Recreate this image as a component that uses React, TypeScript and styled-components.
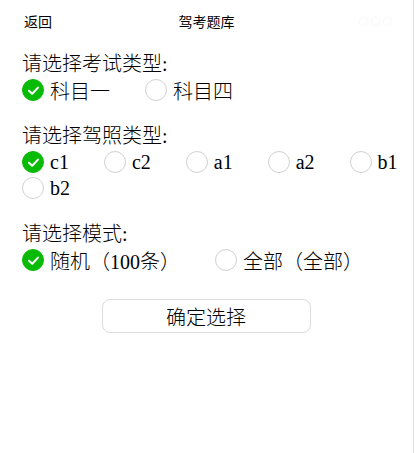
import React, { useState } from "react";
import styled, { createGlobalStyle } from "styled-components";

const Global = createGlobalStyle`
  html, body { margin: 0; padding: 0; background: #fff; }
  body { font-family: "Liberation Serif", "Noto Sans CJK SC", serif; color: #000; }
`;

const Page = styled.div`
  width: 414px;
  height: 453px;
  box-sizing: border-box;
  border-right: 1px solid #dcdcdc;
  background: #fff;
  overflow: hidden;
`;

const NavBar = styled.div`
  height: 42px;
  display: grid;
  grid-template-columns: 1fr auto 1fr;
  align-items: center;
  padding: 0 24px;
  font-family: "Noto Sans CJK SC", "Noto Sans", sans-serif;
  font-size: 14px;
  color: #000;
`;

const Back = styled.span`
  justify-self: start;
`;

const NavTitle = styled.span``;

const Dots = styled.div`
  justify-self: end;
  display: flex;
  gap: 5px;
  margin-right: -2px;
`;

const Dot = styled.span`
  width: 7px;
  height: 7px;
  border-radius: 50%;
  background: #fff;
  box-shadow: 0 0 3px rgba(0, 0, 0, 0.08);
`;

const Content = styled.div`
  padding: 9px 4px 0 22px;
`;

const Section = styled.div`
  & + & {
    margin-top: 20px;
  }
`;

const Title = styled.div`
  font-size: 20px;
  line-height: 26px;
  font-weight: 300;
`;

const Options = styled.div`
  display: flex;
  flex-wrap: wrap;
  column-gap: 35px;
`;

const Option = styled.label`
  display: flex;
  align-items: center;
  height: 26px;
  font-size: 20px;
  font-weight: 300;
  cursor: pointer;
`;

const Circle = styled.span<{ $on: boolean }>`
  width: 22px;
  height: 22px;
  box-sizing: border-box;
  border-radius: 50%;
  margin-right: 6px;
  display: flex;
  align-items: center;
  justify-content: center;
  background: ${(p) => (p.$on ? "#09bb07" : "#fff")};
  border: 1px solid ${(p) => (p.$on ? "#09bb07" : "#d1d1d1")};
`;

const ButtonRow = styled.div`
  display: flex;
  justify-content: center;
  margin-top: 26px;
  padding-right: 1px;
`;

const Button = styled.button`
  width: 209px;
  height: 34px;
  box-sizing: border-box;
  border: 1px solid #dcdcdc;
  border-radius: 8px;
  background: #fff;
  font-family: "Liberation Serif", "Noto Sans CJK SC", serif;
  font-size: 20px;
  font-weight: 300;
  color: #000;
  padding: 0;
`;

const Check = () => (
  <svg width="13" height="13" viewBox="0 0 13 13">
    <path d="M2 6.8 L5.2 9.8 L11 3.6" fill="none" stroke="#fff" strokeWidth="2" strokeLinecap="round" strokeLinejoin="round" />
  </svg>
);

type GroupProps = { title: string; items: string[]; value: number; onChange: (i: number) => void };

const Group = ({ title, items, value, onChange }: GroupProps) => (
  <Section>
    <Title>{title}</Title>
    <Options>
      {items.map((it, i) => (
        <Option key={it} onClick={() => onChange(i)}>
          <Circle $on={value === i}>{value === i && <Check />}</Circle>
          {it}
        </Option>
      ))}
    </Options>
  </Section>
);

export default function App() {
  const [a, setA] = useState(0);
  const [b, setB] = useState(0);
  const [c, setC] = useState(0);
  return (
    <Page>
      <Global />
      <NavBar>
        <Back>返回</Back>
        <NavTitle>驾考题库</NavTitle>
        <Dots>
          <Dot />
          <Dot />
          <Dot />
        </Dots>
      </NavBar>
      <Content>
        <Group title="请选择考试类型:" items={["科目一", "科目四"]} value={a} onChange={setA} />
        <Group title="请选择驾照类型:" items={["c1", "c2", "a1", "a2", "b1", "b2"]} value={b} onChange={setB} />
        <Group title="请选择模式:" items={["随机（100条）", "全部（全部）"]} value={c} onChange={setC} />
      </Content>
      <ButtonRow>
        <Button>确定选择</Button>
      </ButtonRow>
    </Page>
  );
}
